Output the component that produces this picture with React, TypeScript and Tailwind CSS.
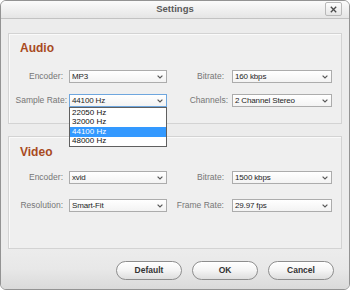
import React from "react";

const Chevron = () => (
  <svg width="6" height="4" viewBox="0 0 6 4" className="shrink-0">
    <polyline points="0.6,0.6 3,3 5.4,0.6" fill="none" stroke="#5a5a5a" strokeWidth="1.2" />
  </svg>
);

type SelProps = { value: string; w: string; focused?: boolean };

const Select = ({ value, w, focused }: SelProps) => (
  <div
    className={
      "h-[13px] flex items-center justify-between pl-[2px] pr-[3px] bg-gradient-to-b from-white to-[#f3f3f3] border " +
      w +
      (focused ? " border-[#6ea6de]" : " border-[#acacac]")
    }
  >
    <span className="text-[8px] leading-none text-[#1e1e1e] tracking-[-0.15px]">{value}</span>
    <Chevron />
  </div>
);

const Label = ({ text, cls }: { text: string; cls: string }) => (
  <div className={"text-right text-[8.5px] leading-none text-[#767676] whitespace-nowrap shrink-0 " + cls}>{text}</div>
);

const Button = ({ text }: { text: string }) => (
  <div className="w-[66px] h-[19px] rounded-full border border-[#8d8d8d] bg-gradient-to-b from-white via-[#f4f4f4] to-[#dedede] shadow-[inset_0_1px_0_#ffffff] flex items-center justify-center">
    <span className="text-[8.5px] font-bold text-[#333]">{text}</span>
  </div>
);

export default function App() {
  return (
    <div
      className="w-[350px] h-[290px] bg-white"
      style={{ fontFamily: '"Liberation Sans", Arial, sans-serif' }}
    >
      <div className="w-[350px] h-[290px] border border-[#939393] rounded-[6px] overflow-hidden flex flex-col bg-[#ececec]">
        {/* title bar */}
        <div className="h-[18px] shrink-0 border-b border-[#c2c2c2] bg-gradient-to-b from-[#fbfbfb] to-[#e5e5e5] relative flex items-center justify-center">
          <span className="text-[9.5px] font-bold text-[#5a5a5a]">Settings</span>
          <div className="absolute right-[7px] top-[1px] w-[17px] h-[14px] rounded-[2px] border border-[#b9b9b9] bg-gradient-to-b from-[#fdfdfd] to-[#e6e6e6] flex items-center justify-center">
            <svg width="7" height="7" viewBox="0 0 7 7">
              <path d="M0.8 0.8 L6.2 6.2 M6.2 0.8 L0.8 6.2" stroke="#4a4a4a" strokeWidth="1.3" />
            </svg>
          </div>
        </div>

        {/* content */}
        <div className="px-[7px] pt-[14px] flex flex-col">
          {/* Audio */}
          <div className="h-[91px] border border-[#d3d3d3] bg-[#efefef] shadow-[inset_1px_1px_0_#fafafa] flex flex-col relative">
            <div className="pl-[11px] pt-[7px] text-[12px] leading-[14px] font-bold text-[#a84a1e]">Audio</div>
            <div className="mt-[15px] flex items-center">
              <Label text="Encoder:" cls="w-[54px]" />
              <div className="ml-[6px]"><Select value="MP3" w="w-[98px]" /></div>
              <Label text="Bitrate:" cls="w-[57px]" />
              <div className="ml-[8px]"><Select value="160 kbps" w="w-[100px]" /></div>
            </div>
            <div className="mt-[11px] flex items-center">
              <Label text="Sample Rate:" cls="w-[58px]" />
              <div className="ml-[2px] relative">
                <Select value="44100 Hz" w="w-[98px]" focused />
                <div className="absolute left-0 top-[13px] w-[98px] border border-[#5f5f5f] bg-white z-10 flex flex-col">
                  {["22050 Hz", "32000 Hz", "44100 Hz", "48000 Hz"].map((v) => (
                    <div
                      key={v}
                      className={
                        "h-[9.5px] pl-[2px] flex items-center text-[8px] leading-none " +
                        (v === "44100 Hz" ? "bg-[#3399ff] text-white" : "text-[#111]")
                      }
                    >
                      {v}
                    </div>
                  ))}
                </div>
              </div>
              <Label text="Channels:" cls="w-[61px]" />
              <div className="ml-[4px]"><Select value="2 Channel Stereo" w="w-[100px]" /></div>
            </div>
          </div>

          {/* Video */}
          <div className="mt-[12px] h-[113px] border border-[#d3d3d3] bg-[#efefef] shadow-[inset_1px_1px_0_#fafafa] flex flex-col">
            <div className="pl-[11px] pt-[8px] text-[12px] leading-[14px] font-bold text-[#a84a1e]">Video</div>
            <div className="mt-[12px] flex items-center">
              <Label text="Encoder:" cls="w-[54px]" />
              <div className="ml-[6px]"><Select value="xvid" w="w-[98px]" /></div>
              <Label text="Bitrate:" cls="w-[57px]" />
              <div className="ml-[8px]"><Select value="1500 kbps" w="w-[100px]" /></div>
            </div>
            <div className="mt-[15px] flex items-center">
              <Label text="Resolution:" cls="w-[54px]" />
              <div className="ml-[6px]"><Select value="Smart-Fit" w="w-[98px]" /></div>
              <Label text="Frame Rate:" cls="w-[57px]" />
              <div className="ml-[8px]"><Select value="29.97 fps" w="w-[100px]" /></div>
            </div>
          </div>
        </div>

        {/* footer */}
        <div className="flex-1 pt-[12px] bg-gradient-to-b from-[#ececec] via-[#e8e8e8] to-[#dadada]">
          <div className="flex justify-end gap-[10px] pr-[15px]">
            <Button text="Default" />
            <Button text="OK" />
            <Button text="Cancel" />
          </div>
        </div>
      </div>
    </div>
  );
}
